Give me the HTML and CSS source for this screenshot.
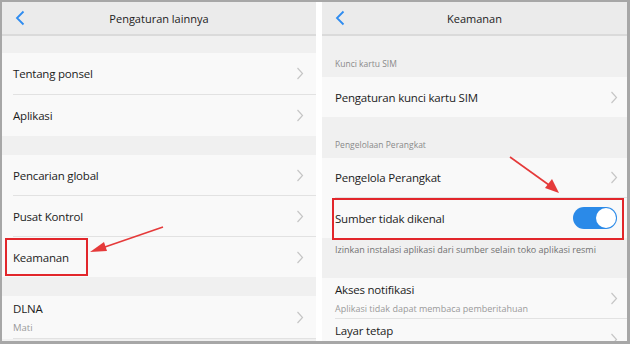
FILE: index.html
```html
<!DOCTYPE html>
<html lang="en">
<head>
<meta charset="UTF-8">
<meta name="viewport" content="width=device-width, initial-scale=1.0">
<title>Pengaturan Keamanan</title>
<link rel="stylesheet" href="styles.css">
</head>
<body>

<div class="frame">
  <div class="screens">

    <!-- Left screen: Pengaturan lainnya -->
    <div class="screen screen-left">
      <div class="topbar">
        <svg class="back" width="10" height="16" viewBox="0 0 10 16"><path d="M8.5 1.5 L2 8 L8.5 14.5" fill="none" stroke="#2f8cf0" stroke-width="1.8"/></svg>
        <span class="topbar-title">Pengaturan lainnya</span>
      </div>

      <div class="gap gap-first"></div>
      <div class="row row-tall"><span class="row-title">Tentang ponsel</span><svg class="chev" width="8" height="13" viewBox="0 0 8 13"><path d="M1.5 1 L6.5 6.5 L1.5 12" fill="none" stroke="#c6c6c6" stroke-width="1.2"/></svg></div>
      <div class="row row-last"><span class="row-title">Aplikasi</span><svg class="chev" width="8" height="13" viewBox="0 0 8 13"><path d="M1.5 1 L6.5 6.5 L1.5 12" fill="none" stroke="#c6c6c6" stroke-width="1.2"/></svg></div>

      <div class="gap gap-mid"></div>
      <div class="row"><span class="row-title">Pencarian global</span><svg class="chev" width="8" height="13" viewBox="0 0 8 13"><path d="M1.5 1 L6.5 6.5 L1.5 12" fill="none" stroke="#c6c6c6" stroke-width="1.2"/></svg></div>
      <div class="row"><span class="row-title">Pusat Kontrol</span><svg class="chev" width="8" height="13" viewBox="0 0 8 13"><path d="M1.5 1 L6.5 6.5 L1.5 12" fill="none" stroke="#c6c6c6" stroke-width="1.2"/></svg></div>
      <div class="row row-last row-short"><span class="row-title">Keamanan</span><svg class="chev" width="8" height="13" viewBox="0 0 8 13"><path d="M1.5 1 L6.5 6.5 L1.5 12" fill="none" stroke="#c6c6c6" stroke-width="1.2"/></svg></div>

      <div class="gap gap-mid"></div>
      <div class="row row-two">
        <div class="row-text">
          <span class="row-title">DLNA</span>
          <span class="row-sub">Mati</span>
        </div>
        <svg class="chev" width="8" height="13" viewBox="0 0 8 13"><path d="M1.5 1 L6.5 6.5 L1.5 12" fill="none" stroke="#c6c6c6" stroke-width="1.2"/></svg>
      </div>
    </div>

    <!-- Right screen: Keamanan -->
    <div class="screen screen-right">
      <div class="topbar">
        <svg class="back" width="10" height="16" viewBox="0 0 10 16"><path d="M8.5 1.5 L2 8 L8.5 14.5" fill="none" stroke="#2f8cf0" stroke-width="1.8"/></svg>
        <span class="topbar-title">Keamanan</span>
      </div>

      <div class="section-label label-first">Kunci kartu SIM</div>
      <div class="row row-last"><span class="row-title">Pengaturan kunci kartu SIM</span><svg class="chev" width="8" height="13" viewBox="0 0 8 13"><path d="M1.5 1 L6.5 6.5 L1.5 12" fill="none" stroke="#c6c6c6" stroke-width="1.2"/></svg></div>

      <div class="section-label">Pengelolaan Perangkat</div>
      <div class="row"><span class="row-title">Pengelola Perangkat</span><svg class="chev" width="8" height="13" viewBox="0 0 8 13"><path d="M1.5 1 L6.5 6.5 L1.5 12" fill="none" stroke="#c6c6c6" stroke-width="1.2"/></svg></div>
      <div class="row row-last">
        <span class="row-title">Sumber tidak dikenal</span>
        <span class="toggle"><span class="knob"></span></span>
      </div>
      <div class="hint">Izinkan instalasi aplikasi dari sumber selain toko aplikasi resmi</div>

      <div class="row row-two">
        <div class="row-text">
          <span class="row-title">Akses notifikasi</span>
          <span class="row-sub">Aplikasi tidak dapat membaca pemberitahuan</span>
        </div>
        <svg class="chev" width="8" height="13" viewBox="0 0 8 13"><path d="M1.5 1 L6.5 6.5 L1.5 12" fill="none" stroke="#c6c6c6" stroke-width="1.2"/></svg>
      </div>
      <div class="row row-cut"><span class="row-title">Layar tetap</span><svg class="chev" width="8" height="13" viewBox="0 0 8 13"><path d="M1.5 1 L6.5 6.5 L1.5 12" fill="none" stroke="#c6c6c6" stroke-width="1.2"/></svg></div>
    </div>

  </div>

  <!-- Annotations drawn over the screenshots -->
  <div class="mark mark-left"></div>
  <div class="mark mark-right"></div>
  <svg class="arrows" width="630" height="344" viewBox="0 0 630 344">
    <line x1="163" y1="227" x2="102" y2="248" stroke="#e53a3a" stroke-width="1.6"/>
    <polygon points="90,252 104,242 107,251" fill="#e53a3a"/>
    <line x1="510" y1="157" x2="549" y2="185" stroke="#e53a3a" stroke-width="1.6"/>
    <polygon points="559,193 545,188 552,179" fill="#e53a3a"/>
  </svg>
</div>

</body>
</html>
```

FILE: styles.css
```css
/* General */
body {
  margin: 0;
  padding: 0;
  font-family: "Open Sans", "Noto Sans", sans-serif;
  color: #1c1c1c;
}

.frame {
  position: relative;
  width: 630px;
  height: 344px;
  box-sizing: border-box;
  padding: 2px 3px 3px 2px;
  background-color: #a7a7a7;
  overflow: hidden;
}

.screens {
  display: flex;
  gap: 6px;
  height: 100%;
  background-color: #fff;
}

.screen {
  display: flex;
  flex-direction: column;
  background-color: #f0f0f0;
  overflow: hidden;
}

.screen > * {
  flex-shrink: 0;
}

.screen-left {
  width: 314px;
}

.screen-right {
  flex: 1;
}

/* Top bar */
.topbar {
  position: relative;
  height: 32px;
  display: flex;
  align-items: center;
  justify-content: center;
  background-color: #ebebeb;
  border-bottom: 2px solid #dadada;
}

.back {
  position: absolute;
  left: 13px;
  top: 8px;
}

.topbar-title {
  font-size: 11px;
  color: #222;
}

/* Grey gaps and section labels */
.gap-first {
  height: 17px;
}

.gap-mid {
  height: 19px;
}

.section-label {
  height: 41px;
  box-sizing: border-box;
  padding: 22px 13px 0;
  font-size: 8.5px;
  color: #8a8a8a;
}

.hint {
  height: 40px;
  box-sizing: border-box;
  padding: 5px 13px 0;
  font-size: 9px;
  color: #707070;
}

/* Rows */
.row {
  display: flex;
  align-items: center;
  justify-content: space-between;
  height: 41px;
  margin-left: 11px;
  padding-right: 12px;
  background-color: #f9f9f9;
  border-bottom: 1px solid #e2e2e2;
  box-sizing: border-box;
  box-shadow: -11px 0 0 #f9f9f9;
}

.screen-right .row {
  height: 40px;
  margin-left: 13px;
  padding-right: 9px;
  box-shadow: -13px 0 0 #f9f9f9;
}

.row-tall {
  height: 42px;
}

.row-short {
  height: 40px;
}

.row-last {
  border-bottom: none;
}

.row-two {
  height: 43px;
}

.screen-right .row-two {
  height: 41px;
}

.screen-right .row-cut {
  height: 30px;
  align-items: flex-start;
  padding-top: 4px;
}

.row-title {
  font-size: 11.5px;
  letter-spacing: -0.2px;
  color: #1c1c1c;
}

.row-text {
  display: flex;
  flex-direction: column;
}

.row-sub {
  font-size: 9px;
  color: #9a9a9a;
  margin-top: 5px;
}

.screen-left .row-sub {
  font-size: 9.5px;
}

.chev {
  display: block;
}

.row-cut .chev {
  margin-top: 10px;
}

/* Toggle */
.toggle {
  display: flex;
  justify-content: flex-end;
  align-items: center;
  width: 44px;
  height: 22px;
  box-sizing: border-box;
  padding: 1px;
  border-radius: 11px;
  background-color: #2b8ae8;
  margin-right: 1px;
}

.knob {
  width: 20px;
  height: 20px;
  border-radius: 50%;
  background-color: #fff;
}

/* Annotations */
.mark {
  position: absolute;
  border: 2px solid #e2262b;
  box-sizing: border-box;
}

.mark-left {
  left: 5px;
  top: 238px;
  width: 83px;
  height: 38px;
}

.mark-right {
  left: 332px;
  top: 198px;
  width: 292px;
  height: 42px;
}

.arrows {
  position: absolute;
  left: 0;
  top: 0;
}
```
